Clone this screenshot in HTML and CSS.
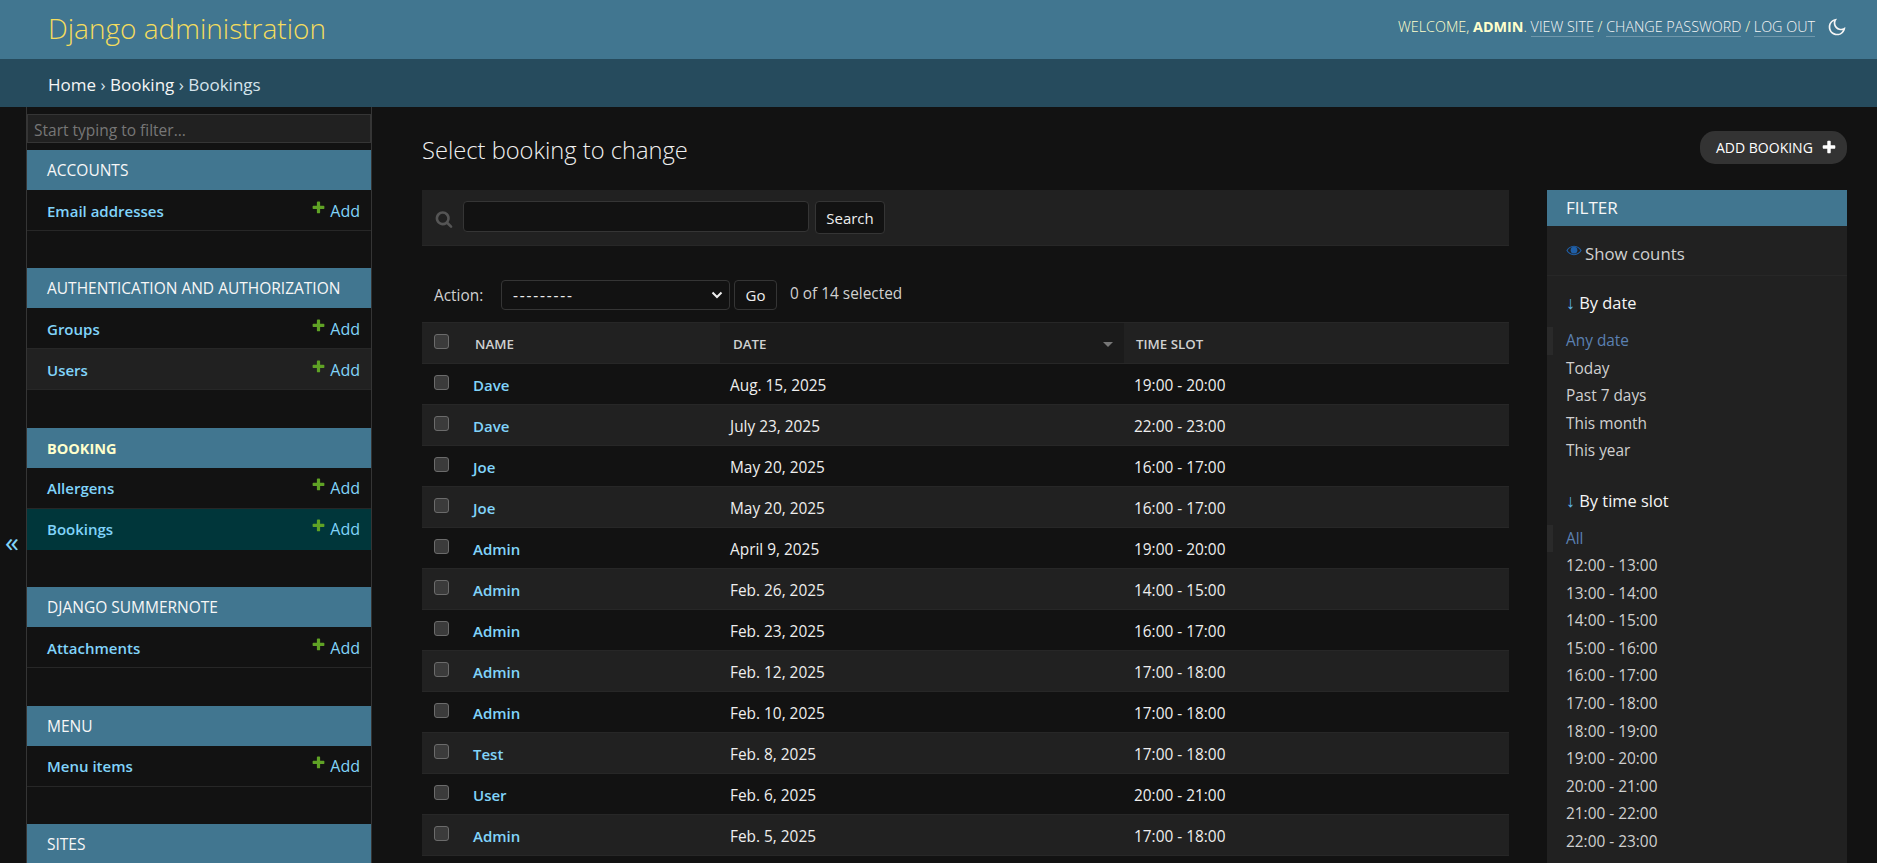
FILE: index.html
```html
<!DOCTYPE html>
<html lang="en">
<head>
    <meta charset="UTF-8">
    <title>Select booking to change | Django site admin</title>
    <link rel="stylesheet" href="styles.css">
</head>
<body>
    <svg class="sprites" width="0" height="0">
        <symbol id="icon-add" viewBox="0 0 1792 1792"><path d="M1600 796v192q0 40-28 68t-68 28h-416v416q0 40-28 68t-68 28h-192q-40 0-68-28t-28-68v-416h-416q-40 0-68-28t-28-68v-192q0-40 28-68t68-28h416v-416q0-40 28-68t68-28h192q40 0 68 28t28 68v416h416q40 0 68 28t28 68z"/></symbol>
    </svg>

    <div id="header">
        <div id="branding">Django administration</div>
        <div id="user-tools">
            <div class="tools-text">Welcome, <strong>admin</strong>. <a href="#">View site</a> / <a href="#">Change password</a> / <a href="#">Log out</a></div>
            <svg class="moon" viewBox="0 0 24 24"><path d="M10 7a7 7 0 0 0 12 4.9v.1c0 5.523-4.477 10-10 10S2 17.523 2 12 6.477 2 12 2h.1A6.979 6.979 0 0 0 10 7zm-6 5a8 8 0 0 0 15.062 3.762A9 9 0 0 1 8.238 4.938 7.999 7.999 0 0 0 4 12z"/></svg>
        </div>
    </div>
    <div class="breadcrumbs"><a href="#">Home</a> › <a href="#">Booking</a> › Bookings</div>

    <div id="main">
        <button class="toggle-nav" type="button">«</button>

        <div id="nav-sidebar">
            <input class="nav-filter" type="text" placeholder="Start typing to filter...">

            <div class="module">
                <div class="caption">Accounts</div>
                <div class="nav-row"><a class="model" href="#">Email addresses</a><a class="addlink" href="#"><svg class="plus"><use href="#icon-add"/></svg>Add</a></div>
            </div>
            <div class="module">
                <div class="caption">Authentication and Authorization</div>
                <div class="nav-row"><a class="model" href="#">Groups</a><a class="addlink" href="#"><svg class="plus"><use href="#icon-add"/></svg>Add</a></div>
                <div class="nav-row alt"><a class="model" href="#">Users</a><a class="addlink" href="#"><svg class="plus"><use href="#icon-add"/></svg>Add</a></div>
            </div>
            <div class="module">
                <div class="caption current-app">Booking</div>
                <div class="nav-row"><a class="model" href="#">Allergens</a><a class="addlink" href="#"><svg class="plus"><use href="#icon-add"/></svg>Add</a></div>
                <div class="nav-row current"><a class="model" href="#">Bookings</a><a class="addlink" href="#"><svg class="plus"><use href="#icon-add"/></svg>Add</a></div>
            </div>
            <div class="module">
                <div class="caption">Django Summernote</div>
                <div class="nav-row"><a class="model" href="#">Attachments</a><a class="addlink" href="#"><svg class="plus"><use href="#icon-add"/></svg>Add</a></div>
            </div>
            <div class="module">
                <div class="caption">Menu</div>
                <div class="nav-row"><a class="model" href="#">Menu items</a><a class="addlink" href="#"><svg class="plus"><use href="#icon-add"/></svg>Add</a></div>
            </div>
            <div class="module">
                <div class="caption">Sites</div>
            </div>
        </div>

        <div id="content">
            <div class="title-row">
                <h1>Select booking to change</h1>
                <a class="add-booking" href="#">Add booking<svg class="plus-white"><use href="#icon-add"/></svg></a>
            </div>

            <div class="changelist">
                <div class="results-col">
                    <div id="toolbar">
                        <svg class="search-icon" viewBox="0 0 1792 1792"><path d="M1216 832q0-185-131.5-316.5t-316.5-131.5-316.5 131.5-131.5 316.5 131.5 316.5 316.5 131.5 316.5-131.5 131.5-316.5zm512 832q0 52-38 90t-90 38q-54 0-90-38l-343-342q-179 124-399 124-143 0-273.5-55.5t-225-150-150-225-55.5-273.5 55.5-273.5 150-225 225-150 273.5-55.5 273.5 55.5 225 150 150 225 55.5 273.5q0 220-124 399l343 343q37 37 37 90z"/></svg>
                        <input class="search-input" type="text">
                        <button class="btn search-btn" type="button">Search</button>
                    </div>

                    <div class="actions">
                        <label>Action:</label>
                        <div class="fake-select">
                            <span class="dashes">---------</span>
                            <svg class="chevron" viewBox="0 0 12 8"><path d="M1.500 1.500 6 6l4.500-4.500" fill="none" stroke="currentColor" stroke-width="2"/></svg>
                        </div>
                        <button class="btn go-btn" type="button">Go</button>
                        <span class="counter">0 of 14 selected</span>
                    </div>

                    <table id="result-list">
                        <thead>
                            <tr>
                                <th class="col-check"><span class="check"></span></th>
                                <th class="col-name">Name</th>
                                <th class="col-date sorted">Date<span class="sort-arrow"></span></th>
                                <th class="col-slot">Time slot</th>
                            </tr>
                        </thead>
                        <tbody>
                            <tr><td><span class="check"></span></td><td class="name"><a href="#">Dave</a></td><td>Aug. 15, 2025</td><td>19:00 - 20:00</td></tr>
                            <tr><td><span class="check"></span></td><td class="name"><a href="#">Dave</a></td><td>July 23, 2025</td><td>22:00 - 23:00</td></tr>
                            <tr><td><span class="check"></span></td><td class="name"><a href="#">Joe</a></td><td>May 20, 2025</td><td>16:00 - 17:00</td></tr>
                            <tr><td><span class="check"></span></td><td class="name"><a href="#">Joe</a></td><td>May 20, 2025</td><td>16:00 - 17:00</td></tr>
                            <tr><td><span class="check"></span></td><td class="name"><a href="#">Admin</a></td><td>April 9, 2025</td><td>19:00 - 20:00</td></tr>
                            <tr><td><span class="check"></span></td><td class="name"><a href="#">Admin</a></td><td>Feb. 26, 2025</td><td>14:00 - 15:00</td></tr>
                            <tr><td><span class="check"></span></td><td class="name"><a href="#">Admin</a></td><td>Feb. 23, 2025</td><td>16:00 - 17:00</td></tr>
                            <tr><td><span class="check"></span></td><td class="name"><a href="#">Admin</a></td><td>Feb. 12, 2025</td><td>17:00 - 18:00</td></tr>
                            <tr><td><span class="check"></span></td><td class="name"><a href="#">Admin</a></td><td>Feb. 10, 2025</td><td>17:00 - 18:00</td></tr>
                            <tr><td><span class="check"></span></td><td class="name"><a href="#">Test</a></td><td>Feb. 8, 2025</td><td>17:00 - 18:00</td></tr>
                            <tr><td><span class="check"></span></td><td class="name"><a href="#">User</a></td><td>Feb. 6, 2025</td><td>20:00 - 21:00</td></tr>
                            <tr><td><span class="check"></span></td><td class="name"><a href="#">Admin</a></td><td>Feb. 5, 2025</td><td>17:00 - 18:00</td></tr>
                        </tbody>
                    </table>
                </div>

                <div id="filter">
                    <h2>Filter</h2>
                    <div class="show-counts">
                        <svg class="eye" viewBox="0 0 24 16"><path fill-rule="evenodd" d="M12 1C6.500 1 2.500 4.500 .5 8c2 3.500 6 7 11.500 7s9.500-3.500 11.500-7C21.500 4.500 17.500 1 12 1zm0 1.500c4.300 0 7.700 2.500 9.600 5.500-1.900 3-5.300 5.500-9.600 5.500S4.300 11 2.400 8C4.300 5 7.700 2.500 12 2.500z"/><circle cx="12" cy="7.500" r="5"/></svg>
                        <a href="#">Show counts</a>
                    </div>
                    <div class="facet">
                        <h3><span class="arrow">↓</span> By date</h3>
                        <ul>
                            <li class="selected"><a href="#">Any date</a></li>
                            <li><a href="#">Today</a></li>
                            <li><a href="#">Past 7 days</a></li>
                            <li><a href="#">This month</a></li>
                            <li><a href="#">This year</a></li>
                        </ul>
                    </div>
                    <div class="facet">
                        <h3><span class="arrow">↓</span> By time slot</h3>
                        <ul>
                            <li class="selected"><a href="#">All</a></li>
                            <li><a href="#">12:00 - 13:00</a></li>
                            <li><a href="#">13:00 - 14:00</a></li>
                            <li><a href="#">14:00 - 15:00</a></li>
                            <li><a href="#">15:00 - 16:00</a></li>
                            <li><a href="#">16:00 - 17:00</a></li>
                            <li><a href="#">17:00 - 18:00</a></li>
                            <li><a href="#">18:00 - 19:00</a></li>
                            <li><a href="#">19:00 - 20:00</a></li>
                            <li><a href="#">20:00 - 21:00</a></li>
                            <li><a href="#">21:00 - 22:00</a></li>
                            <li><a href="#">22:00 - 23:00</a></li>
                        </ul>
                    </div>
                </div>
            </div>
        </div>
    </div>
</body>
</html>
```
FILE: styles.css
```css
* {
    box-sizing: border-box;
}

html, body {
    height: 100%;
}

body {
    margin: 0;
    display: flex;
    flex-direction: column;
    overflow: hidden;
    background-color: #121212;
    color: #eeeeee;
    font-family: "Open Sans", "Noto Sans", Arial, sans-serif;
    font-size: 15.400px;
}

a {
    text-decoration: none;
    color: #81d4fa;
}

.sprites {
    position: absolute;
}

/* Header */
#header {
    flex: none;
    height: 59px;
    padding: 0 30px 0 48px;
    display: flex;
    justify-content: space-between;
    align-items: flex-start;
    background-color: #417690;
    color: #ffffcc;
}

#branding {
    font-size: 28px;
    font-weight: 300;
    line-height: 56px;
    color: #f5dd5d;
}

#user-tools {
    display: flex;
    align-items: center;
    height: 52px;
    font-size: 14.350px;
    font-weight: 300;
    text-transform: uppercase;
}

#user-tools strong {
    font-weight: 700;
}

#user-tools a {
    color: #f5f5f5;
    border-bottom: 1px solid rgba(255, 255, 255, 0.25);
}

.moon {
    width: 20px;
    height: 20px;
    margin: 2px 0 0 12px;
    fill: #f5f5f5;
}

.breadcrumbs {
    flex: none;
    height: 48px;
    padding-left: 48px;
    line-height: 51px;
    background-color: #264b5d;
    color: #d5e4ec;
    font-size: 17px;
    font-weight: 400;
}

.breadcrumbs a {
    color: #f5f5f5;
}

/* Main area */
#main {
    flex: 1;
    display: flex;
    min-height: 0;
}

.toggle-nav {
    flex: none;
    width: 24px;
    margin-right: 2px;
    height: 868px;
    padding: 0;
    border: 0;
    background: none;
    color: #81d4fa;
    font-family: inherit;
    font-size: 28px;
    line-height: 1;
}

#nav-sidebar {
    flex: none;
    width: 346px;
    padding-top: 7px;
    border-left: 1px solid #353535;
    border-right: 1px solid #353535;
}

.nav-filter {
    display: block;
    width: 100%;
    height: 29px;
    margin-bottom: 7px;
    padding: 2px 6px 0;
    border: 1px solid #353535;
    background-color: #212121;
    color: #eeeeee;
    font-family: inherit;
    font-size: 15.500px;
}

.nav-filter::placeholder {
    color: #777777;
}

.module {
    margin-bottom: 37.400px;
}

.caption {
    height: 40px;
    padding-left: 20px;
    line-height: 41px;
    background-color: #417690;
    color: #f7f7f7;
    font-size: 15.500px;
    text-transform: uppercase;
}

.caption.current-app {
    color: #ffffcc;
    font-weight: 700;
    font-size: 14.500px;
}

.nav-row {
    display: flex;
    justify-content: space-between;
    align-items: center;
    height: 41px;
    padding: 1px 11px 0 20px;
    border-bottom: 1px solid #272727;
    font-size: 15px;
}

.nav-row.alt {
    background-color: #212121;
}

.nav-row.current {
    background-color: #00363a;
    border-bottom-color: #00363a;
}

.model {
    font-weight: 600;
}

.addlink {
    display: flex;
    align-items: center;
    font-size: 16px;
}

.plus {
    width: 15px;
    height: 15px;
    margin: -7px 4px 0 0;
    fill: #5fa225;
}

/* Content */
#content {
    flex: 1;
    min-width: 0;
    padding: 24px 30px 0 50px;
}

.title-row {
    display: flex;
    justify-content: space-between;
    align-items: flex-start;
    height: 59px;
}

h1 {
    margin: 0;
    font-size: 23.700px;
    font-weight: 300;
    line-height: 38px;
    color: #f0f0f0;
}

.add-booking {
    display: flex;
    align-items: center;
    width: 147px;
    height: 33px;
    padding-left: 16px;
    border-radius: 15px;
    background-color: #333333;
    color: #ffffff;
    font-size: 14px;
    text-transform: uppercase;
}

.plus-white {
    width: 16px;
    height: 16px;
    margin: -2px 0 0 8px;
    fill: #ffffff;
}

.changelist {
    display: flex;
    gap: 38px;
    align-items: flex-start;
}

.results-col {
    width: 1087px;
    flex: none;
}

#toolbar {
    display: flex;
    align-items: flex-start;
    height: 56px;
    padding: 11px 0 0 13px;
    background-color: #212121;
    border-bottom: 1px solid #272727;
}

.search-icon {
    width: 18px;
    height: 18px;
    margin: 9px 10px 0 0;
    fill: #555555;
}

.search-input {
    width: 346px;
    height: 31px;
    border: 1px solid #353535;
    border-radius: 4px;
    background-color: #121212;
}

.btn {
    height: 33px;
    border: 1px solid #353535;
    border-radius: 4px;
    background-color: #121212;
    color: #eeeeee;
    font-family: inherit;
    font-size: 15px;
    padding: 0;
}

.search-btn {
    width: 70px;
    margin-left: 6px;
}

.actions {
    display: flex;
    align-items: center;
    height: 30px;
    margin: 34px 0 12px;
    padding-left: 12px;
}

.actions label {
    width: 67px;
    color: #d0d0d0;
}

.fake-select {
    display: flex;
    justify-content: space-between;
    align-items: center;
    width: 229px;
    height: 30px;
    padding: 0 6px 0 11px;
    border: 1px solid #353535;
    border-radius: 4px;
}

.dashes {
    letter-spacing: 1.800px;
}

.chevron {
    width: 12px;
    height: 8px;
    color: #eeeeee;
}

.go-btn {
    width: 43px;
    height: 30px;
    margin-left: 4px;
}

.counter {
    margin: -3px 0 0 13px;
    color: #d0d0d0;
}

/* Table */
#result-list {
    width: 100%;
    border-collapse: collapse;
    table-layout: fixed;
}

#result-list th {
    height: 41px;
    padding: 1px 0 0 12px;
    background-color: #212121;
    border-top: 1px solid #272727;
    border-bottom: 1px solid #272727;
    color: #d0d0d0;
    font-size: 13.300px;
    font-weight: 600;
    text-align: left;
    text-transform: uppercase;
}

#result-list th.col-check {
    width: 40px;
    padding: 0 0 4px 12px;
}

#result-list th.col-name {
    width: 258px;
    padding-left: 13px;
}

#result-list th.col-date {
    position: relative;
    width: 404px;
    padding-left: 13px;
    background-color: #1b1b1b;
}

.sort-arrow {
    position: absolute;
    right: 11px;
    top: 19px;
    border-left: 5px solid transparent;
    border-right: 5px solid transparent;
    border-top: 5px solid #777777;
}

#result-list td {
    height: 41px;
    padding: 2px 0 0 10px;
    border-bottom: 1px solid #272727;
}

#result-list td:first-child {
    padding: 0 0 4px 12px;
}

#result-list td.name {
    padding-left: 11px;
    font-size: 15px;
    font-weight: 600;
}

#result-list td.name + td {
    padding-left: 10px;
}

#result-list tbody tr:nth-child(even) {
    background-color: #212121;
}

.check {
    display: block;
    width: 15px;
    height: 15px;
    border: 1px solid #6b6b6b;
    border-radius: 3px;
    background-color: #3b3b3b;
}

/* Filter panel */
#filter {
    flex: none;
    width: 300px;
    background-color: #212121;
    color: #d0d0d0;
    padding-bottom: 40px;
}

#filter h2 {
    margin: 0;
    height: 36px;
    padding-left: 19px;
    background-color: #417690;
    color: #f7f7f7;
    font-size: 17px;
    font-weight: 400;
    line-height: 36px;
    text-transform: uppercase;
}

.show-counts {
    display: flex;
    align-items: center;
    height: 50px;
    padding: 5px 0 0 19px;
    border-bottom: 1px solid #272727;
    font-size: 16.800px;
}

.show-counts a {
    color: #d0d0d0;
    font-weight: 400;
}

.eye {
    width: 16px;
    height: 11px;
    margin: -6px 3px 0 0;
    fill: #1f5fa8;
}

.facet h3 {
    margin: 0;
    padding: 14px 0 0 19px;
    height: 51px;
    color: #f5f5f5;
    font-size: 16.400px;
    font-weight: 400;
}

.arrow {
    color: #5fb7ea;
    font-size: 18px;
}

.facet ul {
    margin: 0 0 9px;
    padding: 0;
    list-style: none;
}

.facet li {
    height: 27.550px;
    padding-left: 19px;
    line-height: 27px;
}

.facet li a {
    color: #d0d0d0;
}

.facet li.selected {
    border-left: 6px solid #2a2a2a;
    padding-left: 13px;
}

.facet li.selected a {
    color: #5b80b2;
}
```
